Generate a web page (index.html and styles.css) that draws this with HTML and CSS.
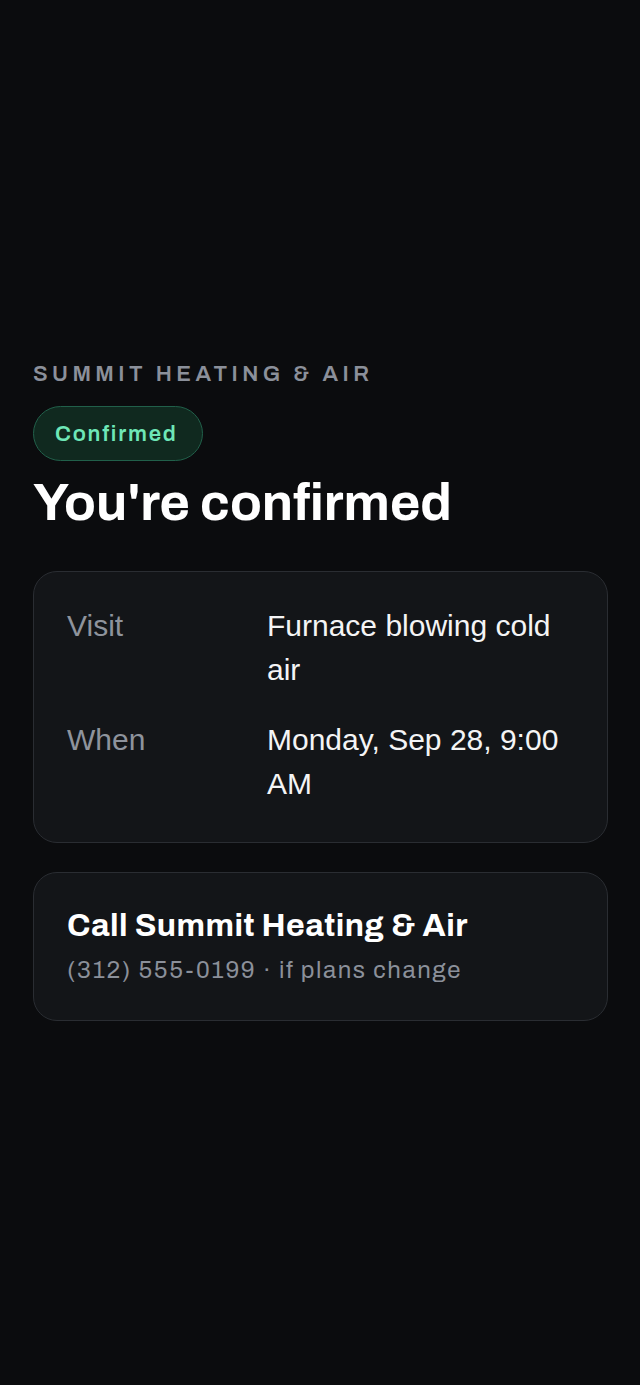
FILE: index.html
```html
<!DOCTYPE html>
<html lang="en">
<head>
<meta charset="utf-8">
<title>You're confirmed</title>
<link rel="stylesheet" href="styles.css">
</head>
<body>
<main class="page">
  <section class="content">
    <p class="eyebrow">SUMMIT HEATING &amp; AIR</p>
    <span class="badge">Confirmed</span>
    <h1 class="title">You're confirmed</h1>
    <div class="card details">
      <div class="row">
        <span class="label">Visit</span>
        <span class="value">Furnace blowing cold air</span>
      </div>
      <div class="row">
        <span class="label">When</span>
        <span class="value">Monday, Sep 28, 9:00 AM</span>
      </div>
    </div>
    <div class="card call">
      <div class="call-title">Call Summit Heating &amp; Air</div>
      <div class="call-sub">(312) 555-0199 · if plans change</div>
    </div>
  </section>
</main>
</body>
</html>
```

FILE: styles.css
```css
* { box-sizing: border-box; }
html, body {
  margin: 0;
  padding: 0;
  background: #0b0c0e;
}
body {
  font-family: "Archivo", "Liberation Sans", Arial, sans-serif;
  color: #f4f4f5;
}
.page {
  min-height: 1385px;
  display: flex;
  align-items: center;
  padding: 0 32px 3px 33px;
}
.content {
  width: 100%;
  display: flex;
  flex-direction: column;
  align-items: flex-start;
}
.eyebrow {
  margin: 0;
  font-size: 22px;
  line-height: 26px;
  font-weight: 600;
  letter-spacing: 4.4px;
  color: #8b909a;
}
.badge {
  margin-top: 19px;
  display: inline-flex;
  align-items: center;
  height: 55px;
  padding: 0 24px 0 21px;
  border-radius: 999px;
  background: #10291f;
  border: 1.5px solid #21604a;
  color: #6ee7b7;
  font-size: 22px;
  font-weight: 600;
  letter-spacing: 1.8px;
}
.title {
  margin: 12px 0 0;
  font-size: 52px;
  line-height: 60px;
  font-weight: 700;
  letter-spacing: 0;
  color: #ffffff;
}
.card {
  width: 100%;
  background: #131518;
  border: 1.5px solid #2a2d32;
  border-radius: 24px;
}
.details {
  margin-top: 38px;
  padding: 32px 33px 37px;
  display: flex;
  flex-direction: column;
  gap: 27px;
}
.row {
  display: grid;
  grid-template-columns: 200px 1fr;
  font-family: "Liberation Sans", Arial, sans-serif;
  font-size: 30px;
  line-height: 43.5px;
}
.label { color: #8e939c; }
.value { color: #f4f4f5; }
.call {
  margin-top: 29px;
  padding: 34px 33px 34px;
  display: flex;
  flex-direction: column;
  gap: 9px;
}
.call-title {
  font-size: 32px;
  line-height: 38px;
  font-weight: 700;
  letter-spacing: 0.45px;
  color: #ffffff;
}
.call-sub {
  font-size: 24px;
  line-height: 32px;
  letter-spacing: 1.6px;
  color: #8b909a;
}
```
